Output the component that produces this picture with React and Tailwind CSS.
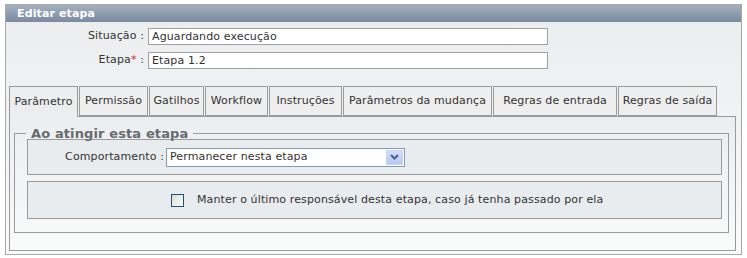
import React from "react";

const tabs = [
  { label: "Parâmetro", w: "w-[69px]", active: true },
  { label: "Permissão", w: "w-[69px]" },
  { label: "Gatilhos", w: "w-[55px]" },
  { label: "Workflow", w: "w-[63px]" },
  { label: "Instruções", w: "w-[73px]" },
  { label: "Parâmetros da mudança", w: "w-[149px]" },
  { label: "Regras de entrada", w: "w-[124px]" },
  { label: "Regras de saída", w: "w-[99px]" },
];

const Field = ({ label, value, required }) => (
  <div className="flex items-center">
    <span className="w-[142px] text-right pr-[4px] text-[#333]">
      {label}
      {required && <span className="text-[#e02020]">*</span>} :
    </span>
    <div className="w-[400px] h-[17px] border border-[#a0a0a0] bg-white flex items-center px-[3px] leading-none">
      {value}
    </div>
  </div>
);

export default function App() {
  return (
    <div
      className="w-[747px] h-[258px] bg-white pt-[4px] pl-[5px] text-[11px] tracking-[0.12px] text-[#333]"
      style={{ fontFamily: '"DejaVu Sans", Verdana, sans-serif' }}
    >
      <div className="w-[737px] h-[251px] border border-[#a8a8a8] flex flex-col bg-gradient-to-b from-[#eaecee] to-[#fafafa]">
        <div className="h-[17px] bg-gradient-to-b from-[#a6b1bf] via-[#8e9db1] to-[#7a8aa0] text-white font-bold pl-[11px] flex items-center leading-none">
          Editar etapa
        </div>

        <div className="flex flex-col gap-[7px] mt-[6px]">
          <Field label="Situação" value="Aguardando execução" />
          <Field label="Etapa" value="Etapa 1.2" required />
        </div>

        <div className="flex gap-px ml-[3px] mt-[17px]">
          {tabs.map((t) => (
            <div
              key={t.label}
              className={`${t.w} h-[30px] flex items-center justify-center border border-[#9a9a9a] whitespace-nowrap ${
                t.active ? "border-b-0 bg-[#ebedef] h-[31px] -mb-px relative z-10" : "bg-[#eeeeee]"
              }`}
            >
              {t.label}
            </div>
          ))}
        </div>

        <div className="ml-[3px] w-[727px] h-[135px] border border-[#9a9a9a] pt-[9px] pl-[4px] pr-[6px] bg-gradient-to-b from-[#ebedef] to-[#f9fafa]">
          <fieldset className="border border-[#9a9a9a] h-[107px] pl-[12px] pr-[6px]">
            <legend className="-ml-[1px] px-[5px] text-[13px] font-bold text-[#676b70] leading-[15px]">
              Ao atingir esta etapa
            </legend>
            <div className="-mt-[2px] h-[36px] border border-[#9a9a9a] bg-[#e9ecee] flex items-center pl-[37px]">
              <span className="w-[101px] text-right pr-[2px]">Comportamento :</span>
              <div className="w-[239px] h-[19px] border border-[#7f9db9] bg-white flex items-center justify-between pl-[3px] pr-px">
                <span>Permanecer nesta etapa</span>
                <div className="w-[17px] h-[15px] bg-gradient-to-b from-[#d3defb] to-[#b6c8f5] border border-[#c5d3f5] flex items-center justify-center">
                  <svg width="9" height="6" viewBox="0 0 9 6">
                    <path d="M1 1 L4.5 4.5 L8 1" stroke="#4d6185" strokeWidth="2" fill="none" />
                  </svg>
                </div>
              </div>
            </div>
            <div className="mt-[6px] h-[38px] border border-[#9a9a9a] bg-[#e9ecee] flex items-center pl-[143px]">
              <div className="w-[13px] h-[13px] border border-[#1c5180] bg-gradient-to-br from-[#dcdcd7] to-[#fbfbf9] mr-[13px]" />
              <span>Manter o último responsável desta etapa, caso já tenha passado por ela</span>
            </div>
          </fieldset>
        </div>
      </div>
    </div>
  );
}
